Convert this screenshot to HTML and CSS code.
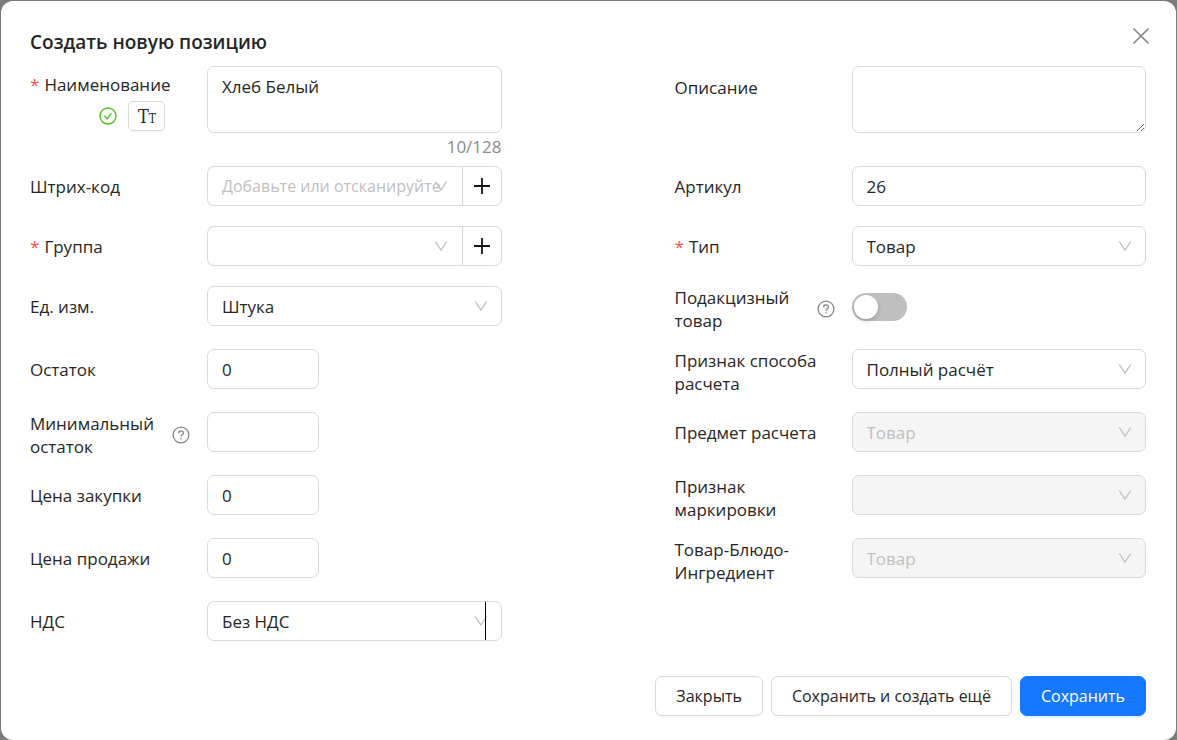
FILE: index.html
```html
<!DOCTYPE html>
<html lang="ru">
<head>
<meta charset="utf-8">
<meta name="viewport" content="width=device-width, initial-scale=1">
<title>Создать новую позицию</title>
<link rel="stylesheet" href="styles.css">
</head>
<body>
<svg class="sprite" aria-hidden="true">
  <symbol id="chevron" viewBox="0 0 14 12"><path d="M1.3 1.5 7 10 12.7 1.5" fill="none" stroke="currentColor" stroke-width="1.3"/></symbol>
  <symbol id="plus" viewBox="0 0 18 18"><path d="M9 1v16M1 9h16" fill="none" stroke="currentColor" stroke-width="1.8"/></symbol>
  <symbol id="help" viewBox="0 0 18 18"><circle cx="9" cy="9" r="7.9" fill="none" stroke="currentColor" stroke-width="1.3"/><path d="M6.5 7.2c0-3.2 5-3.1 5-.2 0 1.7-2.5 1.8-2.5 3.8" fill="none" stroke="currentColor" stroke-width="1.3"/><circle cx="9" cy="12.8" r=".8" fill="currentColor"/></symbol>
</svg>
<main class="modal" role="dialog" aria-labelledby="title">
  <header class="header">
    <h1 class="title" id="title">Создать новую позицию</h1>
    <button class="close" type="button" aria-label="Закрыть окно"><svg width="18" height="18" viewBox="0 0 18 18"><path d="M1.5 1.5l15 15M16.5 1.5l-15 15" fill="none" stroke="currentColor" stroke-width="1.6"/></svg></button>
  </header>
  <form class="form">
    <div class="fields">
      <div class="field">
        <div class="label label-name">
          <label for="name"><span class="required">*</span>Наименование</label>
          <div class="name-tools">
            <svg width="18" height="18" viewBox="0 0 18 18"><circle cx="9" cy="9" r="8" fill="none" stroke="currentColor" stroke-width="1.4"/><path d="M5.4 8.8l2.8 3.1 4.2-5.7" fill="none" stroke="currentColor" stroke-width="1.4"/></svg>
            <button class="case-button" type="button" aria-label="Изменить регистр">T<span class="case-small">T</span></button>
          </div>
        </div>
        <div>
          <textarea class="input area area-fixed" id="name">Хлеб Белый</textarea>
          <div class="counter">10/128</div>
        </div>
      </div>
      <div class="field">
        <label class="label label-area" for="description">Описание</label>
        <textarea class="input area" id="description"></textarea>
      </div>

      <div class="field">
        <label class="label" for="barcode">Штрих-код</label>
        <div class="group">
          <div class="select"><select class="input placeholder" id="barcode"><option>Добавьте или отсканируйте</option></select><svg class="chevron"><use href="#chevron"/></svg></div>
          <button class="add" type="button" aria-label="Добавить штрих-код"><svg width="18" height="18"><use href="#plus"/></svg></button>
        </div>
      </div>
      <div class="field">
        <label class="label" for="article">Артикул</label>
        <input class="input" id="article" type="text" value="26">
      </div>

      <div class="field">
        <label class="label" for="group"><span><span class="required">*</span>Группа</span></label>
        <div class="group">
          <div class="select"><select class="input" id="group"><option></option></select><svg class="chevron"><use href="#chevron"/></svg></div>
          <button class="add" type="button" aria-label="Добавить группу"><svg width="18" height="18"><use href="#plus"/></svg></button>
        </div>
      </div>
      <div class="field">
        <label class="label" for="type"><span><span class="required">*</span>Тип</span></label>
        <div class="select"><select class="input" id="type"><option>Товар</option></select><svg class="chevron"><use href="#chevron"/></svg></div>
      </div>

      <div class="field tall">
        <label class="label" for="unit">Ед. изм.</label>
        <div class="select"><select class="input" id="unit"><option>Штука</option></select><svg class="chevron"><use href="#chevron"/></svg></div>
      </div>
      <div class="field tall">
        <label class="label" for="excise"><span>Подакцизный товар</span><svg class="help"><use href="#help"/></svg></label>
        <input class="switch" id="excise" type="checkbox" role="switch">
      </div>

      <div class="field tall">
        <label class="label" for="stock">Остаток</label>
        <input class="input short" id="stock" type="text" value="0">
      </div>
      <div class="field tall">
        <label class="label" for="method">Признак способа расчета</label>
        <div class="select"><select class="input" id="method"><option>Полный расчёт</option></select><svg class="chevron"><use href="#chevron"/></svg></div>
      </div>

      <div class="field tall">
        <label class="label" for="min-stock"><span>Минимальный остаток</span><svg class="help"><use href="#help"/></svg></label>
        <input class="input short" id="min-stock" type="text">
      </div>
      <div class="field tall">
        <label class="label" for="subject">Предмет расчета</label>
        <div class="select"><select class="input" id="subject" disabled><option>Товар</option></select><svg class="chevron"><use href="#chevron"/></svg></div>
      </div>

      <div class="field tall">
        <label class="label" for="buy">Цена закупки</label>
        <input class="input short" id="buy" type="text" value="0">
      </div>
      <div class="field tall">
        <label class="label" for="marking">Признак маркировки</label>
        <div class="select"><select class="input" id="marking" disabled><option></option></select><svg class="chevron"><use href="#chevron"/></svg></div>
      </div>

      <div class="field tall">
        <label class="label" for="sell">Цена продажи</label>
        <input class="input short" id="sell" type="text" value="0">
      </div>
      <div class="field tall">
        <label class="label" for="kind">Товар-Блюдо-Ингредиент</label>
        <div class="select"><select class="input" id="kind" disabled><option>Товар</option></select><svg class="chevron"><use href="#chevron"/></svg></div>
      </div>

      <div class="field tall">
        <label class="label" for="vat">НДС</label>
        <div class="select caret"><select class="input" id="vat"><option>Без НДС</option></select><svg class="chevron"><use href="#chevron"/></svg></div>
      </div>
    </div>
    <footer class="footer">
      <button class="button" type="button">Закрыть</button>
      <button class="button" type="button">Сохранить и создать ещё</button>
      <button class="button primary" type="submit">Сохранить</button>
    </footer>
  </form>
</main>
</body>
</html>
```
FILE: styles.css
```css
* { box-sizing: border-box; }

body {
  margin: 0;
  padding: 1px 1px 0;
  background: #7c7c7c;
  color: #262626;
  font: 17px/23px "Open Sans", "Noto Sans", sans-serif;
}

button, input, select, textarea { font: inherit; color: inherit; margin: 0; }
button { cursor: pointer; }
svg { display: block; flex: none; }

.sprite { position: absolute; width: 0; height: 0; }

.modal {
  padding: 26px 30px 24px 29px;
  border-radius: 12px;
  background: #fff;
}

.header {
  display: flex;
  justify-content: space-between;
  align-items: flex-start;
  height: 39px;
}

.title { margin: 0; font-size: 19px; line-height: 30px; font-weight: 600; }

.close {
  display: flex;
  padding: 0;
  margin-right: -4px;
  border: 0;
  background: none;
  color: #858585;
}

.fields {
  display: grid;
  grid-template-columns: 1fr 1fr;
  gap: 17px 173px;
}

.field {
  display: grid;
  grid-template-columns: 177px minmax(0, 1fr);
  align-items: start;
  min-height: 43px;
}

.tall { min-height: 46px; }

.label {
  display: flex;
  align-items: center;
  justify-content: space-between;
  min-height: 40px;
  padding-right: 17px;
}

.label-name {
  flex-direction: column;
  justify-self: start;
  align-items: flex-end;
  padding: 7px 0 0;
}

.name-tools {
  display: flex;
  align-items: center;
  gap: 11px;
  padding: 5px 5px 0 0;
  color: #52c41a;
}

.case-button {
  display: flex;
  justify-content: center;
  align-items: baseline;
  width: 37px;
  height: 30px;
  padding: 0;
  border: 1px solid #d9d9d9;
  border-radius: 5px;
  background: #fff;
  box-shadow: 0 2px 0 rgba(0, 0, 0, .02);
  color: #262626;
  font: 18px/30px "DejaVu Serif Condensed", "DejaVu Serif", serif;
}

.case-small { font-size: 12px; }

.required {
  margin-right: 5px;
  color: #ff4d4f;
}

.help { width: 18px; height: 18px; color: #858585; }

.input {
  display: block;
  width: 100%;
  height: 40px;
  padding: 0 14px;
  border: 1px solid #d9d9d9;
  border-radius: 7px;
  background: #fff;
  outline: 0;
  appearance: none;
}

.input:disabled { background: #f5f5f5; color: #bfbfbf; opacity: 1; }

.short { width: 112px; }

.area { height: 67px; padding: 8px 14px; resize: vertical; }
.area-fixed { resize: none; }

.label-area { min-height: 43px; }

.counter { height: 16px; padding-top: 2px; color: #8c8c8c; text-align: right; }

.placeholder { padding-right: 0; color: #bfbfbf; font-size: 16px; }

.select { position: relative; flex: 1; min-width: 0; }

.chevron {
  position: absolute;
  top: 14px;
  right: 14px;
  width: 14px;
  height: 12px;
  color: #bfbfbf;
  pointer-events: none;
}

.caret::after {
  content: "";
  position: absolute;
  top: 1px;
  right: 16px;
  width: 1px;
  height: 38px;
  background: #000;
}

.group { display: flex; }
.group .input { border-right: 0; border-radius: 7px 0 0 7px; }

.add {
  display: flex;
  align-items: center;
  justify-content: center;
  width: 40px;
  height: 40px;
  padding: 0;
  border: 1px solid #d9d9d9;
  border-radius: 0 7px 7px 0;
  background: #fff;
  color: #141414;
}

.switch {
  width: 55px;
  height: 28px;
  margin-top: 7px;
  padding: 2px;
  border-radius: 14px;
  background: #bfbfbf;
  appearance: none;
}

.switch::before {
  content: "";
  display: block;
  width: 24px;
  height: 24px;
  border-radius: 50%;
  background: #fff;
  box-shadow: 0 2px 4px rgba(0, 35, 11, .2);
}

.switch:checked { background: #1677ff; }
.switch:checked::before { margin-left: auto; }

.footer {
  display: flex;
  justify-content: flex-end;
  gap: 8px;
  padding-top: 29px;
}

.button {
  height: 40px;
  padding: 0 20px;
  border: 1px solid #d9d9d9;
  border-radius: 7px;
  background: #fff;
  box-shadow: 0 2px 0 rgba(0, 0, 0, .02);
  font-size: 16px;
}

.primary {
  border-color: #1677ff;
  background: #1677ff;
  box-shadow: 0 2px 0 rgba(5, 145, 255, .1);
  color: #fff;
}

@media (max-width: 900px) {
  .fields { grid-template-columns: 1fr; }
  .footer { flex-wrap: wrap; }
}
```
